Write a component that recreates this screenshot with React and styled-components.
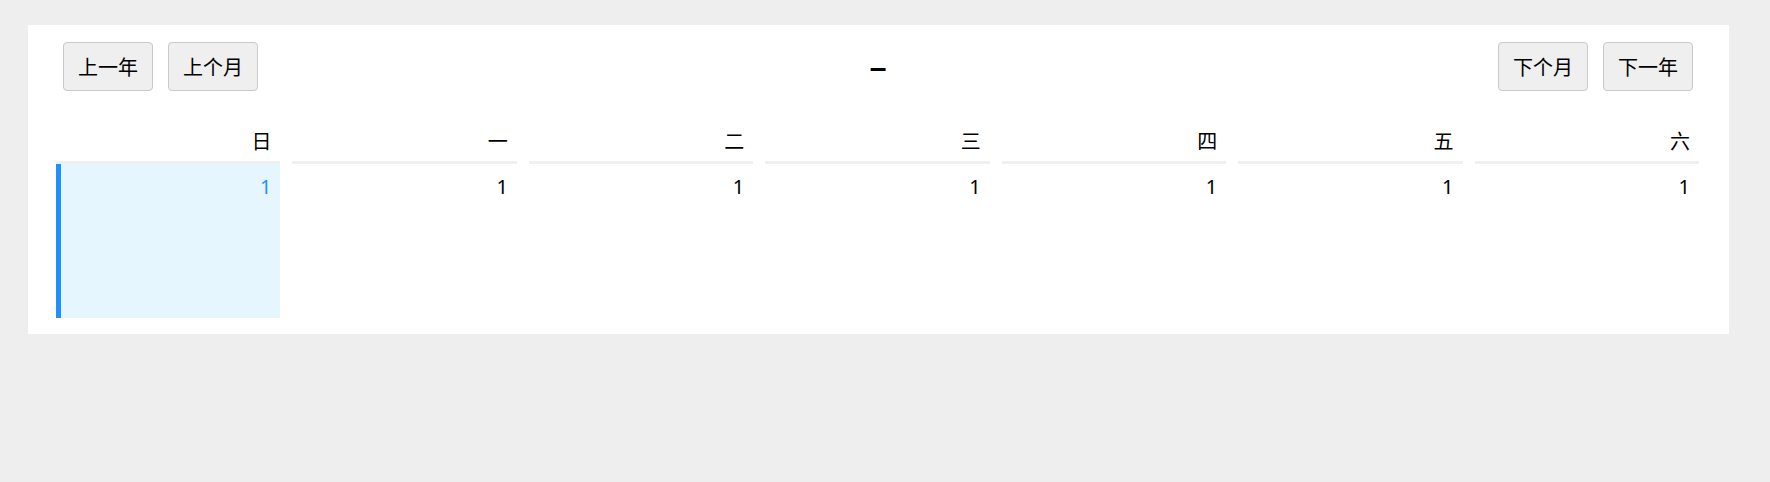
import React from "react";
import styled, { createGlobalStyle } from "styled-components";

const GlobalStyle = createGlobalStyle`
  html, body {
    margin: 0;
    padding: 0;
    background: #eeeeee;
  }
  body {
    font-family: "Noto Sans", "Noto Sans CJK SC", sans-serif;
    color: #000;
  }
`;

const Page = styled.div`
  padding: 25px 0 0 28px;
`;

const Card = styled.div`
  width: 1701px;
  box-sizing: border-box;
  background: #ffffff;
  padding: 17px 30px 16px 28px;
`;

const Header = styled.div`
  display: flex;
  align-items: center;
  padding: 0 6px 0 7px;
`;

const ButtonGroup = styled.div`
  display: flex;
  gap: 15px;
`;

const NavButton = styled.button`
  font-family: "Noto Sans CJK SC", sans-serif;
  font-size: 20px;
  line-height: 29px;
  padding: 9px 14px;
  border: 1px solid #c9c9c9;
  border-radius: 4px;
  background: #efefef;
  color: #000;
  cursor: pointer;
`;

const Title = styled.div`
  flex: 1;
  text-align: center;
  font-family: "Liberation Sans", sans-serif;
  font-size: 30px;
  font-weight: 700;
  line-height: 40px;
  padding: 2px 0 0;
`;

const Grid = styled.div`
  display: grid;
  grid-template-columns: repeat(7, 1fr);
  column-gap: 12px;
`;

const WeekRow = styled(Grid)`
  margin-top: 35px;
`;

const WeekDay = styled.div`
  font-family: "Noto Sans CJK SC", sans-serif;
  font-size: 20px;
  line-height: 29px;
  text-align: right;
  padding: 0 9px 6px 0;
`;

const DayCell = styled.div`
  border-top: 3px solid #f0f0f0;
  height: 154px;
`;

const DayInner = styled.div`
  height: 100%;
  box-sizing: border-box;
  padding: 8px 9px 0 0;
  text-align: right;
  font-size: 20px;
  line-height: 29px;
  background: ${(p) => (p.$selected ? "#e6f6fe" : "transparent")};
  border-left: ${(p) => (p.$selected ? "5px solid #1e90ff" : "none")};
  color: ${(p) => (p.$selected ? "#1e90ff" : "#000")};
`;

const weekDays = ["日", "一", "二", "三", "四", "五", "六"];

export default function App() {
  return (
    <>
      <GlobalStyle />
      <Page>
        <Card>
          <Header>
            <ButtonGroup>
              <NavButton>上一年</NavButton>
              <NavButton>上个月</NavButton>
            </ButtonGroup>
            <Title>–</Title>
            <ButtonGroup>
              <NavButton>下个月</NavButton>
              <NavButton>下一年</NavButton>
            </ButtonGroup>
          </Header>
          <WeekRow>
            {weekDays.map((d) => (
              <WeekDay key={d}>{d}</WeekDay>
            ))}
          </WeekRow>
          <Grid>
            {weekDays.map((d, i) => (
              <DayCell key={d}>
                <DayInner $selected={i === 0}>1</DayInner>
              </DayCell>
            ))}
          </Grid>
        </Card>
      </Page>
    </>
  );
}
